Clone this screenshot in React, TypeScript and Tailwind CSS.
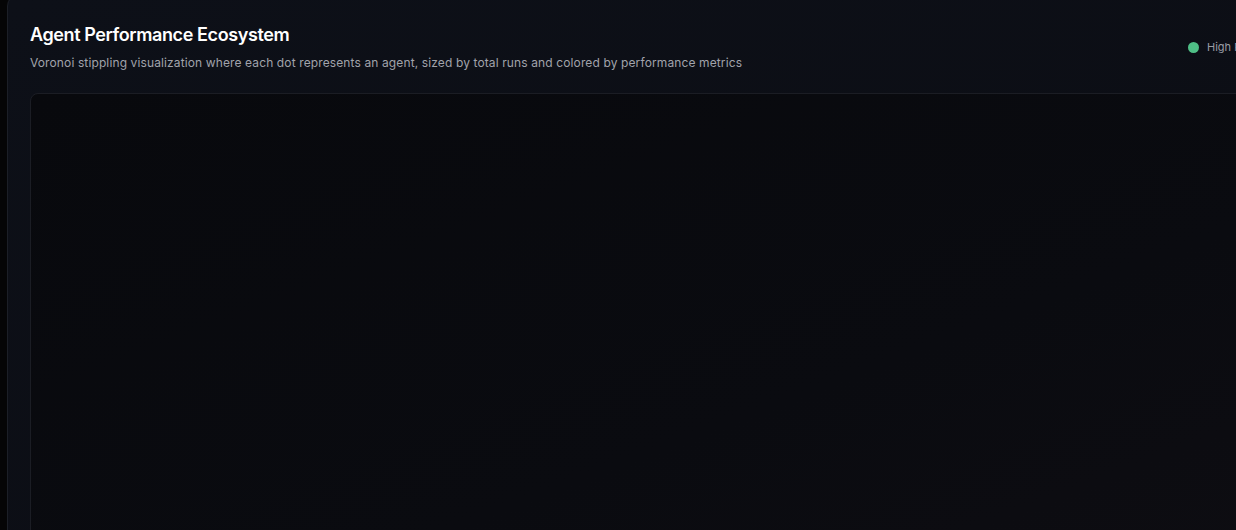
const legend = [
  { label: "High Performance", color: "bg-[#4fbf86]" },
  { label: "Medium Performance", color: "bg-[#e0b04a]" },
  { label: "Low Performance", color: "bg-[#e05a5a]" },
];

export default function App() {
  return (
    <div
      className="h-[530px] w-[1236px] overflow-hidden bg-[#050506] pl-[7px]"
      style={{ fontFamily: "Inter, 'Noto Sans', sans-serif" }}
    >
      <div className="-mt-[6px] w-[1608px] rounded-xl border border-[#1c1f27] bg-gradient-to-br from-[#0d1018] via-[#0c0e15] to-[#0e0f15] px-[22px] pt-[26px]">
        {/* Header */}
        <div className="flex items-start justify-between">
          <div>
            <h2 className="text-[18px] font-semibold leading-[28px] tracking-[-0.4px] text-white">
              Agent Performance Ecosystem
            </h2>
            <p className="mt-[6px] text-[12px] leading-[16px] tracking-[0.12px] text-[#a1a3ab]">
              Voronoi stippling visualization where each dot represents an agent, sized by total runs and colored by performance metrics
            </p>
          </div>
          <div className="mr-[16px] mt-[18px] flex items-center gap-4">
            {legend.map((item) => (
              <div key={item.label} className="flex items-center gap-[8px]">
                <span className={`h-[11px] w-[11px] rounded-full ${item.color}`} />
                <span className="text-[11px] leading-[16px] text-[#9a9ca4]">{item.label}</span>
              </div>
            ))}
          </div>
        </div>

        {/* Canvas */}
        <div className="mt-[22px] h-[600px] rounded-lg border border-[#1b1d24] bg-gradient-to-br from-[#08090d] via-[#0a0b10] to-[#100e13]" />
      </div>
    </div>
  );
}
